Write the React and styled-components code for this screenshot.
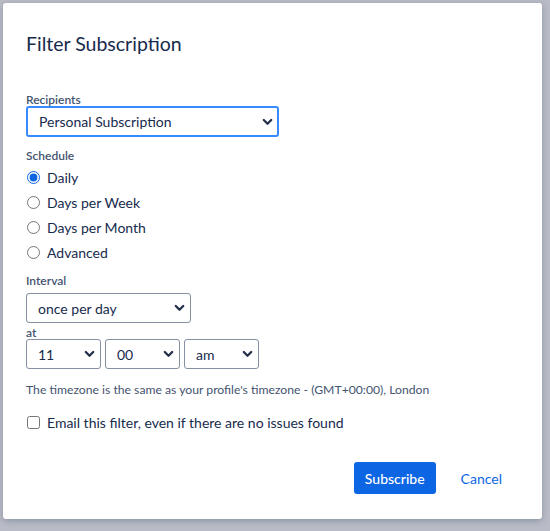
import React from "react";
import styled, { createGlobalStyle } from "styled-components";

const GlobalStyle = createGlobalStyle`
  html, body {
    margin: 0;
    padding: 0;
    background: #b9bcc6;
    font-family: "Lato", "Noto Sans", sans-serif;
  }
`;

// Styled components
const Backdrop = styled.div`
  width: 550px;
  height: 531px;
  padding: 3px 0 0 3px;
  box-sizing: border-box;
  background: #b9bcc6;
  overflow: hidden;
`;

const Dialog = styled.div`
  width: 539px;
  height: 516px;
  background: #fff;
  border-radius: 3px;
  box-shadow: 0 2px 6px rgba(9, 30, 66, 0.25);
  box-sizing: border-box;
  padding: 27px 27px 0 23px;
  display: flex;
  flex-direction: column;
  align-items: flex-start;
  color: #172b4d;
`;

const Title = styled.h1`
  margin: 0;
  font-size: 19.5px;
  font-weight: 400;
  line-height: 28px;
  color: #172b4d;
`;

const Label = styled.div`
  font-size: 12px;
  font-weight: 600;
  color: #44546f;
  line-height: 13px;
  margin-top: ${props => props.top || 0}px;
`;

const SelectWrap = styled.div`
  position: relative;
  width: ${props => props.w}px;
  margin-top: ${props => props.top || 0}px;
`;

const Select = styled.select`
  appearance: none;
  display: block;
  width: 100%;
  height: ${props => props.h || 30}px;
  box-sizing: border-box;
  border: ${props => props.focused ? "2px solid #388bff" : "1px solid #8590a2"};
  border-radius: 3px;
  background: #fff;
  font-family: inherit;
  font-size: 14px;
  color: #172b4d;
  padding: 0 0 0 11px;
  outline: none;
`;

const Chevron = styled.svg`
  position: absolute;
  right: 6px;
  top: 50%;
  transform: translateY(-50%);
  pointer-events: none;
`;

const RadioList = styled.div`
  display: flex;
  flex-direction: column;
  gap: 5px;
  margin-top: 5px;
`;

const OptionRow = styled.label`
  display: flex;
  align-items: center;
  height: 20px;
  font-size: 14px;
  color: #172b4d;
  gap: 7px;

  input {
    margin: 0 0 0 1px;
    width: 13px;
    height: 13px;
    accent-color: #0c66e4;
  }
`;

const TimeRow = styled.div`
  display: flex;
  gap: 4px;
`;

const Hint = styled.div`
  font-size: 12.2px;
  color: #44546f;
  margin-top: 13px;
  line-height: 16px;
`;

const CheckRow = styled(OptionRow)`
  margin-top: 14px;
`;

const Footer = styled.div`
  align-self: stretch;
  display: flex;
  justify-content: flex-end;
  align-items: center;
  gap: 13px;
  margin-top: 30px;
`;

const PrimaryButton = styled.button`
  height: 32px;
  padding: 0 11px;
  border: none;
  border-radius: 3px;
  background: #0c66e4;
  color: #fff;
  font-family: inherit;
  font-size: 14px;
  font-weight: 500;
`;

const LinkButton = styled.button`
  height: 32px;
  padding: 0 13px 0 12px;
  border: none;
  background: none;
  color: #0c66e4;
  font-family: inherit;
  font-size: 14px;
`;

function Dropdown({ w, h, value, options, focused, top }) {
  return (
    <SelectWrap w={w} top={top}>
      <Select h={h} focused={focused} defaultValue={value}>
        {options.map(o => <option key={o}>{o}</option>)}
      </Select>
      <Chevron width="11" height="8" viewBox="0 0 11 8">
        <path d="M1.8 2 L5.5 5.7 L9.2 2" fill="none" stroke="#22304a" strokeWidth="2.3" strokeLinecap="round" strokeLinejoin="round" />
      </Chevron>
    </SelectWrap>
  );
}

const schedules = ["Daily", "Days per Week", "Days per Month", "Advanced"];

export default function App() {
  return (
    <Backdrop>
      <GlobalStyle />
      <Dialog>
        <Title>Filter Subscription</Title>
        <Label top={35}>Recipients</Label>
        <Dropdown w={253} h={31} focused value="Personal Subscription"
          options={["Personal Subscription", "Group Subscription"]} />
        <Label top={12}>Schedule</Label>
        <RadioList>
          {schedules.map((s, i) => (
            <OptionRow key={s}>
              <input type="radio" name="schedule" defaultChecked={i === 0} />
              {s}
            </OptionRow>
          ))}
        </RadioList>
        <Label top={12}>Interval</Label>
        <Dropdown w={165} top={6} value="once per day"
          options={["once per day", "every hour", "every 2 hours"]} />
        <Label top={3}>at</Label>
        <TimeRow>
          <Dropdown w={75} value="11" options={["11", "12"]} />
          <Dropdown w={75} value="00" options={["00", "15", "30", "45"]} />
          <Dropdown w={75} value="am" options={["am", "pm"]} />
        </TimeRow>
        <Hint>The timezone is the same as your profile's timezone - (GMT+00:00), London</Hint>
        <CheckRow>
          <input type="checkbox" />
          Email this filter, even if there are no issues found
        </CheckRow>
        <Footer>
          <PrimaryButton>Subscribe</PrimaryButton>
          <LinkButton>Cancel</LinkButton>
        </Footer>
      </Dialog>
    </Backdrop>
  );
}
